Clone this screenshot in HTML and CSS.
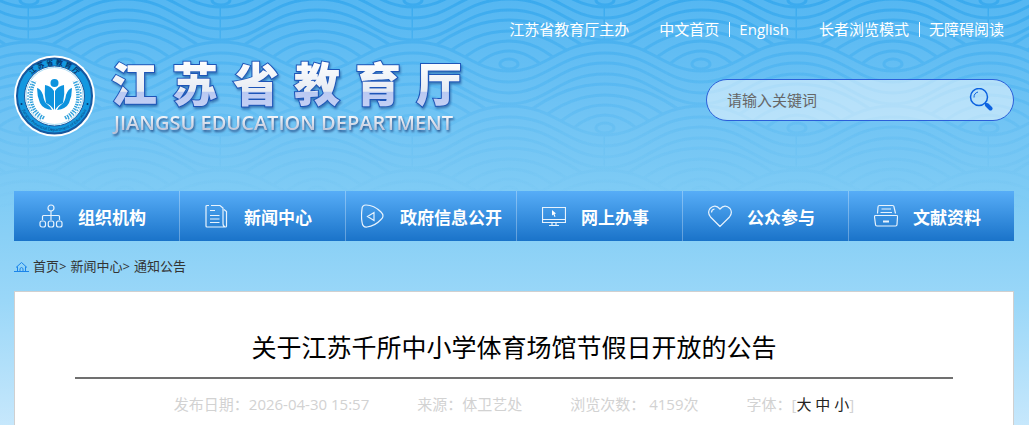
FILE: index.html
```html
<!DOCTYPE html>
<html lang="zh-CN">
<head>
    <meta charset="UTF-8">
    <meta name="viewport" content="width=device-width, initial-scale=1.0">
    <title>关于江苏千所中小学体育场馆节假日开放的公告</title>
    <link rel="stylesheet" href="styles.css">
</head>
<body>

<!-- 背景波纹 -->
<svg class="waves" aria-hidden="true">
    <defs>
        <linearGradient id="waveFade" x1="0" y1="0" x2="0" y2="1">
            <stop offset="0" stop-color="#1f9dea" stop-opacity=".5"/>
            <stop offset=".3" stop-color="#2fa6ee" stop-opacity=".32"/>
            <stop offset=".6" stop-color="#2fa6ee" stop-opacity=".15"/>
            <stop offset="1" stop-color="#4fb4f0" stop-opacity="0"/>
        </linearGradient>
        <g id="wave" fill="none" stroke="#fff" stroke-width="3">
            <path fill="#000" d="M-192 -86C-146 -86 -134 -57 -96 -57S-46 -86 0 -86S58 -57 96 -57S146 -86 192 -86S250 -57 288 -57V80H-192Z"/>
            <path d="M-192 -75C-146 -75 -134 -46 -96 -46S-46 -75 0 -75S58 -46 96 -46S146 -75 192 -75S250 -46 288 -46"/>
            <path d="M-192 -65C-146 -65 -134 -35 -96 -35S-46 -65 0 -65S58 -35 96 -35S146 -65 192 -65S250 -35 288 -35"/>
            <path d="M-192 -54C-146 -54 -134 -24 -96 -24S-46 -54 0 -54S58 -24 96 -24S146 -54 192 -54S250 -24 288 -24"/>
            <path d="M-80 -14C-50 -36 -26 -44 0 -44S50 -36 80 -14M-68 -6C-44 -26 -22 -33 0 -33S44 -26 68 -6M-54 2C-36 -16 -18 -23 0 -23S36 -16 54 2M-38 6C-24 -8 -12 -13 0 -13S24 -8 38 6"/>
            <path d="M112 -14C142 -36 166 -44 192 -44S242 -36 272 -14M124 -6C148 -26 170 -33 192 -33S236 -26 260 -6M138 2C156 -16 174 -23 192 -23S228 -16 246 2M154 6C168 -8 180 -13 192 -13S216 -8 230 6"/>
            <ellipse cx="0" cy="0" rx="9" ry="5"/>
            <ellipse cx="192" cy="0" rx="9" ry="5"/>
        </g>
        <pattern id="waveTile" x="29" y="0" width="192" height="128" patternUnits="userSpaceOnUse">
            <use href="#wave"/>
            <use href="#wave" x="-96" y="64"/>
            <use href="#wave" y="128"/>
            <use href="#wave" x="-96" y="192"/>
        </pattern>
        <mask id="waveMask">
            <rect width="100%" height="100%" fill="url(#waveTile)"/>
        </mask>
    </defs>
    <rect width="100%" height="100%" fill="url(#waveFade)" mask="url(#waveMask)"/>
</svg>

<div class="container">
    <!-- 顶部链接 -->
    <div class="top-links">
        <a href="#">江苏省教育厅主办</a>
        <div class="link-group">
            <a href="#">中文首页</a>
            <a href="#">English</a>
        </div>
        <div class="link-group">
            <a href="#">长者浏览模式</a>
            <a href="#">无障碍阅读</a>
        </div>
    </div>

    <!-- 标志和搜索 -->
    <div class="header">
        <a href="#" class="logo">
            <svg width="460" height="91" viewBox="0 0 460 91">
                <defs>
                    <linearGradient id="cnFill" gradientUnits="userSpaceOnUse" x1="0" y1="10" x2="0" y2="56">
                        <stop offset="0" stop-color="#fff"/>
                        <stop offset=".68" stop-color="#e6ebf3"/>
                        <stop offset=".7" stop-color="#b9c9f2"/>
                        <stop offset="1" stop-color="#c3d0f5"/>
                    </linearGradient>
                    <linearGradient id="enFill" gradientUnits="userSpaceOnUse" x1="0" y1="66" x2="0" y2="81">
                        <stop offset="0" stop-color="#f4f7fb"/>
                        <stop offset="1" stop-color="#b9c2d8"/>
                    </linearGradient>
                    <path id="ringTop" d="M9.500 46A31 31 0 0 1 71.500 46"/>
                    <path id="ringBottom" d="M5.500 46A35 35 0 0 0 75.500 46"/>
                    <g id="leaves" fill="none" stroke="#35a3dd">
                        <path d="M30 68Q17 61 17 46Q17 38 21 31" stroke-width="3.500" stroke-dasharray="1.500 1"/>
                        <path d="M27 69Q14 61 14 47Q14 38 19 30" stroke-width="1.500" stroke-dasharray="1.500 1.500"/>
                    </g>
                </defs>
                <circle cx="40.500" cy="46" r="40.500" fill="#fff"/>
                <circle cx="40.500" cy="46" r="37.500" fill="#1398e0" stroke="#15589f" stroke-width="2"/>
                <circle cx="40.500" cy="46" r="30" fill="#fff" stroke="#15589f" stroke-width="1"/>
                <circle cx="40.500" cy="46" r="28.500" fill="none" stroke="#a9dcf5"/>
                <text class="ring-cn"><textPath href="#ringTop" startOffset="50%" text-anchor="middle">江 苏 省 教 育 厅</textPath></text>
                <text class="ring-en"><textPath href="#ringBottom" startOffset="50%" text-anchor="middle">Jiangsu Provincial Department of Education</textPath></text>
                <circle cx="7.500" cy="54" r="1" fill="#06366e"/>
                <circle cx="73.500" cy="54" r="1" fill="#06366e"/>
                <use href="#leaves"/>
                <use href="#leaves" transform="matrix(-1 0 0 1 81 0)"/>
                <g fill="#0d93de">
                    <circle cx="40.500" cy="33" r="4"/>
                    <path d="M31 35Q37 36 40 41V60Q37 55 32 53Q30 44 31 35ZM50 35Q44 36 41 41V60Q44 55 49 53Q51 44 50 35Z"/>
                    <path d="M23 38Q27 39 29 45Q30 52 33 54Q36 56 38 60Q29 59 26 53Q23 46 23 38ZM58 38Q54 39 52 45Q51 52 48 54Q45 56 43 60Q52 59 55 53Q58 46 58 38Z"/>
                </g>
                <text class="name-cn" x="97 158 219 280 341 402" y="51">江苏省教育厅</text>
                <text class="name-en" x="100" y="80">JIANGSU EDUCATION DEPARTMENT</text>
            </svg>
        </a>
        <form class="search">
            <input type="text" placeholder="请输入关键词" aria-label="请输入关键词">
            <button type="submit" aria-label="搜索">
                <svg width="24" height="24" viewBox="0 0 24 24" fill="none" stroke="#0b62e0">
                    <circle cx="10" cy="9" r="8.500" stroke-width="1.500"/>
                    <path d="M5 9.500A5.500 5.500 0 0 1 9 4" stroke-width="1"/>
                    <path d="M16 15L18 17" stroke-width="2"/>
                    <path d="M18 17L21.500 20.500" stroke-width="4" stroke-linecap="round"/>
                </svg>
            </button>
        </form>
    </div>

    <!-- 导航 -->
    <nav class="nav">
        <a href="#">
            <svg class="nav-icon" viewBox="0 0 24 24">
                <circle cx="12" cy="4" r="3"/>
                <path d="M12 7V16M3.500 16V12.500Q3.500 11.500 4.500 11.500H19.500Q20.500 11.500 20.500 12.500V16"/>
                <rect x="1" y="17" width="5.500" height="6" rx="2"/>
                <rect x="9.250" y="17" width="5.500" height="6" rx="2"/>
                <rect x="17.500" y="17" width="5.500" height="6" rx="2"/>
            </svg>
            组织机构
        </a>
        <a href="#">
            <svg class="nav-icon" viewBox="0 0 24 24">
                <path d="M4 1.500H2Q1 1.500 1 2.500V22Q1 23 2 23H20.500Q21.500 23 21.500 22V7.500L19 5.500M6 1.500H15L18 4V19.500Q18 22.500 20 22.500M5 6.500H10M5 11.500H14.500M5 15H14.500M5 18.500H14.500"/>
            </svg>
            新闻中心
        </a>
        <a href="#" class="wide">
            <svg class="nav-icon" viewBox="0 0 24 24">
                <path d="M1 5Q1 1 5 1Q13 1 20 8Q24 12 20 15.500Q14 22 6 23Q1.500 23.500 1 18Q0 12 1 5ZM13 8.500V16.500L6.500 12.500Z"/>
            </svg>
            政府信息公开
        </a>
        <a href="#">
            <svg class="nav-icon" viewBox="0 0 24 24">
                <path d="M.5 3.500H23.500V18.500H.5ZM.5 15.500H23.500M10 18.500V21.500M14 18.500V21.500M7 21.500H17"/>
                <path d="M10 6L14 9.500L12.500 10L13.500 12.500L12.500 13L11.500 10.500L10 11.500Z" fill="#fff" stroke="none"/>
            </svg>
            网上办事
        </a>
        <a href="#">
            <svg class="nav-icon" viewBox="0 0 24 24">
                <path d="M12 22.500L2.500 13Q-1 8.500 2 4.500Q7 -.5 12 5Q17 -.5 22 4.500Q25 8.500 21.500 13ZM3.500 8.500Q3.500 5.500 6.500 5"/>
            </svg>
            公众参与
        </a>
        <a href="#">
            <svg class="nav-icon" viewBox="0 0 24 24">
                <path d="M3.500 9.500L4 3Q4 1.500 5.500 1.500H18.500Q20 1.500 20 3L21.500 9.500M7.500 5H17M6.500 8.500H18M1.500 11.500H22.500Q24 11.500 23.500 13L23 20.500Q23 22 21.500 22H3Q1.500 22 1.500 20.500L.5 13Q.5 11.500 1.500 11.500Z"/>
                <path d="M9 17.500H15" stroke-width="2"/>
            </svg>
            文献资料
        </a>
    </nav>

    <!-- 当前位置 -->
    <div class="breadcrumb">
        <svg width="15" height="11" viewBox="0 0 15 11" fill="none" stroke="#1a84ea">
            <path d="M0 10.500H15M2 6.500L7.500 1.500L13 6.500M3.500 5.500V10M11.500 5.500V10M6 10V7.500Q7.500 5.500 9 7.500V10"/>
        </svg>
        <span><a href="#">首页</a>&gt;</span>
        <span><a href="#">新闻中心</a>&gt;</span>
        <span><a href="#">通知公告</a></span>
    </div>

    <!-- 正文 -->
    <div class="article">
        <h1>关于江苏千所中小学体育场馆节假日开放的公告</h1>
        <div class="info">
            <span>发布日期：2026-04-30 15:57</span>
            <span>来源：体卫艺处</span>
            <span>浏览次数： 4159次</span>
            <span>字体：[<a href="#">大</a> <a href="#">中</a> <a href="#">小</a>]</span>
        </div>
    </div>
</div>

</body>
</html>
```
FILE: styles.css
```css
* {
    box-sizing: border-box;
}
body {
    font-family: "Open Sans", "Noto Sans CJK SC", sans-serif;
    font-size: 15px;
    margin: 0;
    background: #c8e8fc linear-gradient(#55b7f2 0, #6fc3f4 110px, #80ccf5 200px, #9ad7f8 300px, #c8e8fc 430px) no-repeat;
}
a {
    color: inherit;
    text-decoration: none;
}
.waves {
    position: absolute;
    top: 0;
    left: 0;
    width: 100%;
    height: 210px;
}
.container {
    position: relative;
    padding: 0 15px 0 14px;
}
.top-links {
    display: flex;
    justify-content: flex-end;
    gap: 30px;
    height: 50px;
    padding: 17px 10px 0 0;
    line-height: 24px;
    color: #fff;
}
.link-group {
    display: flex;
}
.link-group a + a {
    position: relative;
    margin-left: 10px;
    padding-left: 10px;
}
.link-group a + a::before {
    content: "";
    position: absolute;
    left: 0;
    top: 5px;
    height: 15px;
    border-left: 1px solid #fff;
}
.header {
    display: flex;
    justify-content: space-between;
    align-items: flex-start;
}
.logo svg {
    display: block;
}
.name-cn {
    font-family: "Noto Sans CJK SC", sans-serif;
    font-size: 46px;
    font-weight: 900;
    fill: url(#cnFill);
    stroke: #1d55b8;
    stroke-width: 2px;
    paint-order: stroke;
    filter: drop-shadow(1px 2px 1px rgba(20, 70, 140, 0.6));
}
.name-en {
    font-size: 20px;
    font-weight: 600;
    fill: url(#enFill);
    filter: drop-shadow(1px 2px 1px rgba(20, 50, 110, 0.7));
}
.ring-cn {
    font-size: 7px;
    font-weight: bold;
    fill: #06366e;
}
.ring-en {
    font-size: 4px;
    fill: #06366e;
}
.search {
    display: flex;
    align-items: center;
    width: 308px;
    height: 42px;
    margin-top: 29px;
    padding: 0 20px;
    border: 1px solid #2b5fd9;
    border-radius: 21px;
    background: rgba(255, 255, 255, 0.5);
}
.search input {
    flex: 1;
    min-width: 0;
    padding: 0;
    border: 0;
    outline: 0;
    background: none;
    font: inherit;
    color: #333;
}
.search input::placeholder {
    color: #666;
}
.search button {
    padding: 0;
    border: 0;
    background: none;
    cursor: pointer;
}
.search button svg {
    display: block;
}
.nav {
    display: grid;
    grid-template-columns: 166fr 166fr 171fr 166fr 166fr 165fr;
    margin-top: 50px;
    background: linear-gradient(#57adf7, #1a73c9);
    color: #fff;
    font-size: 17px;
    font-weight: bold;
}
.nav a {
    display: flex;
    align-items: center;
    gap: 15px;
    height: 50px;
    padding-left: 25px;
    border-right: 1px solid rgba(255, 255, 255, 0.3);
    white-space: nowrap;
}
.nav a.wide {
    padding-left: 15px;
}
.nav a:last-child {
    border-right: 0;
}
.nav-icon {
    flex: none;
    width: 24px;
    height: 24px;
    fill: none;
    stroke: #e8f3fd;
    stroke-width: 1.2px;
}
.breadcrumb {
    display: flex;
    align-items: center;
    gap: 4px;
    height: 50px;
    font-size: 13px;
    line-height: 20px;
    color: #333;
}
.article {
    padding: 35px 60px 10px;
    border: 1px solid #d0d0d0;
    border-bottom: 0;
    background: #fff;
}
.article h1 {
    margin: 0;
    padding-bottom: 10px;
    border-bottom: 2px solid #707070;
    font-size: 25px;
    font-weight: normal;
    line-height: 40px;
    text-align: center;
    color: #000;
}
.info {
    display: flex;
    justify-content: center;
    gap: 48px;
    padding-top: 13px;
    line-height: 24px;
    color: #d2d2d2;
}
.info a {
    color: #222;
}
```
